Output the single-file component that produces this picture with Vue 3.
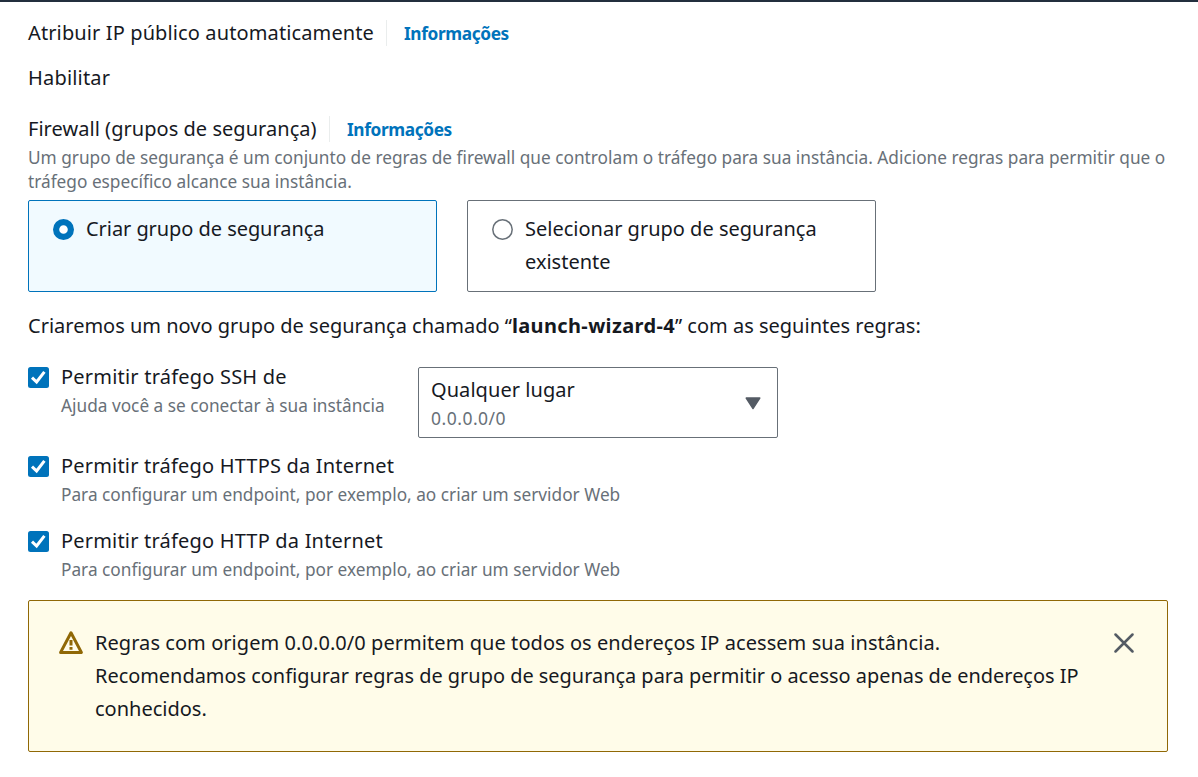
<script setup>
import { ref } from 'vue'

const group = ref('create')
const warningOpen = ref(true)
const rules = ref([
  { id: 'ssh', label: 'Permitir tráfego SSH de', hint: 'Ajuda você a se conectar à sua instância', checked: true, select: true },
  { id: 'https', label: 'Permitir tráfego HTTPS da Internet', hint: 'Para configurar um endpoint, por exemplo, ao criar um servidor Web', checked: true },
  { id: 'http', label: 'Permitir tráfego HTTP da Internet', hint: 'Para configurar um endpoint, por exemplo, ao criar um servidor Web', checked: true },
])
</script>

<template>
  <main class="page">
    <div class="heading">
      <span class="title-ip">Atribuir IP público automaticamente</span>
      <a class="info">Informações</a>
    </div>
    <div class="value">Habilitar</div>

    <div class="heading">
      <span class="title-fw">Firewall (grupos de segurança)</span>
      <a class="info">Informações</a>
    </div>
    <p class="description">
      Um grupo de segurança é um conjunto de regras de firewall que controlam o tráfego para sua instância. Adicione regras para permitir que o<br />tráfego específico alcance sua instância.
    </p>

    <div class="tiles">
      <div class="tile" :class="{ selected: group === 'create' }" @click="group = 'create'">
        <svg class="radio" viewBox="0 0 21 21">
          <circle v-if="group === 'create'" cx="10.5" cy="10.5" r="7.4" fill="#fff" stroke="#0073bb" stroke-width="6.2" />
          <circle v-else cx="10.5" cy="10.5" r="9.7" fill="#fff" stroke="#687078" stroke-width="1.5" />
        </svg>
        <span class="create">Criar grupo de segurança</span>
      </div>
      <div class="tile" :class="{ selected: group === 'existing' }" @click="group = 'existing'">
        <svg class="radio" viewBox="0 0 21 21">
          <circle v-if="group === 'existing'" cx="10.5" cy="10.5" r="7.4" fill="#fff" stroke="#0073bb" stroke-width="6.2" />
          <circle v-else cx="10.5" cy="10.5" r="9.7" fill="#fff" stroke="#687078" stroke-width="1.5" />
        </svg>
        <span>Selecionar grupo de segurança<br />existente</span>
      </div>
    </div>

    <p class="summary">Criaremos um novo grupo de segurança chamado “<b>launch-wizard-4</b>” com as seguintes regras:</p>

    <div class="rules">
      <div v-for="rule in rules" :key="rule.id" class="rule" :class="rule.id">
        <svg class="check" viewBox="0 0 21 21" @click="rule.checked = !rule.checked">
          <rect width="21" height="21" rx="2.5" :fill="rule.checked ? '#0073bb' : '#fff'" />
          <path v-if="rule.checked" d="M4 10.6 8.6 15 16.4 4.8" fill="none" stroke="#fff" stroke-width="3" />
        </svg>
        <div class="rule-text">
          <div class="rule-label">{{ rule.label }}</div>
          <div class="hint">{{ rule.hint }}</div>
        </div>
        <div v-if="rule.select" class="select">
          <div>
            <div class="option">Qualquer lugar</div>
            <div class="cidr">0.0.0.0/0</div>
          </div>
          <svg class="caret" viewBox="0 0 16 13">
            <path d="M1.2 1h13.6L8 11.6z" fill="#545b64" stroke="#545b64" stroke-width="1.4" stroke-linejoin="round" />
          </svg>
        </div>
      </div>
    </div>

    <div v-if="warningOpen" class="warning">
      <svg class="alert" viewBox="0 0 26 26">
        <path d="M13 2.8 23.4 22.4H2.6z" fill="none" stroke="#906806" stroke-width="3" stroke-linejoin="round" />
        <path d="M13 10v5.6M13 17v2.8" stroke="#906806" stroke-width="3" />
      </svg>
      <div class="message">
        <div class="line-1">Regras com origem 0.0.0.0/0 permitem que todos os endereços IP acessem sua instância.</div>
        <div class="line-2">Recomendamos configurar regras de grupo de segurança para permitir o acesso apenas de endereços IP</div>
        <div class="line-3">conhecidos.</div>
      </div>
      <svg class="close" viewBox="0 0 20 20" @click="warningOpen = false">
        <path d="M1.5 1.5l17 17M18.5 1.5l-17 17" stroke="#545b64" stroke-width="2.5" stroke-linecap="round" />
      </svg>
    </div>
  </main>
</template>

<style>
body {
  background: #fff;
}
</style>

<style scoped>
.page {
  box-sizing: border-box;
  height: 777px;
  padding: 14px 30px 0 28px;
  border-top: 2px solid #232f3e;
  overflow: hidden;
  color: #16191f;
  font-family: "Noto Sans", "Open Sans", sans-serif;
  font-size: 20px;
  line-height: 33px;
  white-space: nowrap;
}
p {
  margin: 0;
}
.heading {
  display: flex;
  align-items: center;
}
.title-ip {
  width: 346px;
  letter-spacing: 0.12px;
}
.title-fw {
  width: 289px;
  letter-spacing: 0.04px;
}
.info {
  box-sizing: border-box;
  height: 26px;
  margin-left: 12px;
  padding: 1px 0 0 17px;
  border-left: 1px solid #eaeded;
  color: #0073bb;
  font-size: 17.3px;
  font-weight: 700;
  line-height: 26px;
  letter-spacing: -0.38px;
}
.value {
  margin: 12px 0 18px;
  letter-spacing: 0.18px;
}
.description,
.hint {
  padding-top: 1px;
  color: #687078;
  font-size: 17.25px;
  line-height: 24px;
}
.tiles {
  display: flex;
  gap: 30px;
  margin-top: 6px;
}
.tile {
  box-sizing: border-box;
  display: flex;
  width: 409px;
  height: 92px;
  padding: 11px 24px;
  border: 1px solid #687078;
  border-radius: 2px;
}
.tile.selected {
  border-color: #0073bb;
  background: #f1faff;
}
.radio {
  flex: none;
  width: 21px;
  height: 21px;
  margin: 7px 12px 0 0;
}
.create {
  letter-spacing: -0.06px;
}
.summary {
  margin-top: 17px;
}
.summary b {
  letter-spacing: 0.36px;
}
.rule {
  display: flex;
  height: 57px;
  margin-top: 18px;
}
.rule.https {
  margin-top: 32px;
}
.check {
  flex: none;
  width: 21px;
  height: 21px;
  margin: 7px 12px 0 0;
}
.rule-label {
  letter-spacing: 0.19px;
}
.ssh .rule-label {
  letter-spacing: 0.21px;
}
.ssh .rule-text {
  width: 323px;
}
.select {
  box-sizing: border-box;
  display: flex;
  justify-content: space-between;
  align-items: center;
  width: 360px;
  height: 71px;
  margin: 7px 0 0 34px;
  padding: 0 16px 0 12px;
  border: 1px solid #687078;
  border-radius: 2px;
}
.option {
  line-height: 31px;
  letter-spacing: 0.06px;
}
.cidr {
  color: #687078;
  font-size: 17.5px;
  line-height: 26px;
  letter-spacing: 0.5px;
}
.caret {
  width: 16px;
  height: 13px;
  margin-top: 1px;
}
.warning {
  box-sizing: border-box;
  display: flex;
  height: 152px;
  margin-top: 19px;
  padding: 25px 33px 0 29px;
  border: 1px solid #906806;
  border-radius: 2px;
  background: #fffce9;
}
.alert {
  flex: none;
  width: 26px;
  height: 26px;
  margin: 4px 11px 0 0;
}
.message {
  flex: 1;
}
.line-1 {
  letter-spacing: 0.06px;
}
.line-2 {
  font-size: 19.93px;
}
.close {
  flex: none;
  width: 20px;
  height: 20px;
  margin-top: 7px;
}
</style>
